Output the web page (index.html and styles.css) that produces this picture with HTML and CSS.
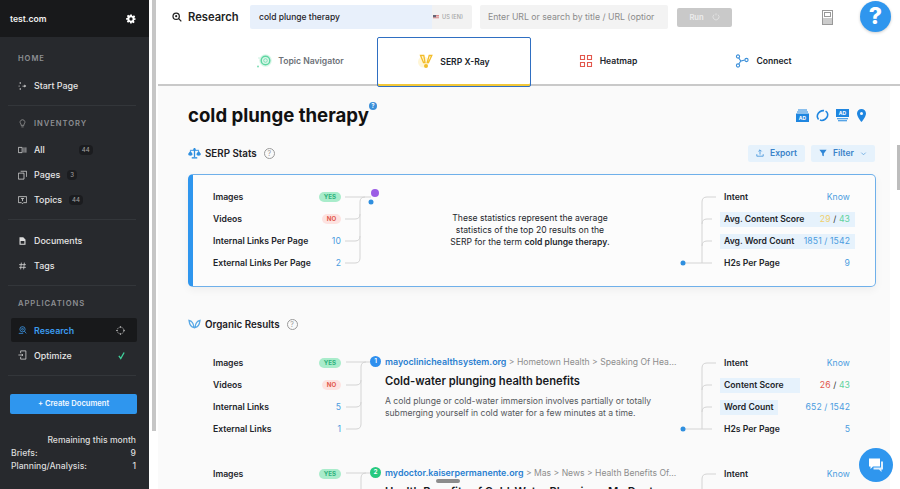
FILE: index.html
```html
<!DOCTYPE html>
<html lang="en">
<head>
<meta charset="utf-8">
<title>Research</title>
<link rel="stylesheet" href="styles.css">
</head>
<body>
<div class="app">
  <aside class="sidebar">
    <header class="brand">
      <span>test.com</span>
      <svg class="gear" viewBox="0 0 24 24"><path fill="#fff" fill-rule="evenodd" d="M10 1h4l.6 3.2 1.900.8 2.700-1.800 2.800 2.800-1.800 2.700.8 1.900L23 10v4l-3.200.6-.8 1.900 1.800 2.700-2.800 2.800-2.700-1.800-1.900.8L14 23h-4l-.6-3.200-1.900-.8-2.700 1.800-2.800-2.800 1.800-2.700-.8-1.900L0 14v-4l3.200-.6.8-1.900-1.800-2.700L5 2l2.700 1.800 1.900-.8zM12 8a4 4 0 100 8 4 4 0 000-8z"/></svg>
    </header>
    <div class="side-title side-home">HOME</div>
    <div class="nav-item">
      <svg class="nav-icon" viewBox="0 0 12 12"><g fill="#ddd"><circle cx="3" cy="2" r="1"/><circle cx="3" cy="10" r="1"/><circle cx="1.500" cy="6" r=".8"/><path d="M6 5.500h2.500V4l2.500 2-2.500 2V6.500H6z"/></g></svg>
      <span>Start Page</span>
    </div>
    <div class="divider"></div>
    <div class="side-title side-inv">
      <svg class="nav-icon-s" viewBox="0 0 12 12"><path fill="none" stroke="#999" stroke-width="1" d="M6 1a3.200 3.200 0 012 5.700V8.500H4V6.700A3.200 3.200 0 016 1zM4.500 10.500h3"/></svg>
      <span>INVENTORY</span>
    </div>
    <div class="nav-item">
      <svg class="nav-icon" viewBox="0 0 12 12"><path fill="none" stroke="#ddd" d="M.5 2.500h5v7h-5zM8 2.500v7M10.500 2.500v7"/></svg>
      <span>All</span><b class="count count-all">44</b>
    </div>
    <div class="nav-item">
      <svg class="nav-icon" viewBox="0 0 12 12"><path fill="none" stroke="#ddd" d="M.5 3.500h7.500v8H.5zM3.500 1h8v7.500"/></svg>
      <span>Pages</span><b class="count">3</b>
    </div>
    <div class="nav-item">
      <svg class="nav-icon" viewBox="0 0 12 12"><path fill="none" stroke="#ddd" d="M.5 1.500h11v8H7.500L6 11 4.500 9.500H.5zM4 4h4M6 4v3.500"/></svg>
      <span>Topics</span><b class="count">44</b>
    </div>
    <div class="divider"></div>
    <div class="nav-group">
      <div class="nav-item">
        <svg class="nav-icon" viewBox="0 0 12 12"><path fill="#ddd" d="M2 1h5l3 3v7H2zM3.500 6v3.500h5V6z"/></svg>
        <span>Documents</span>
      </div>
      <div class="nav-item">
        <svg class="nav-icon" viewBox="0 0 12 12"><path fill="none" stroke="#ddd" d="M4.500 1.500L3.500 10.500M8.500 1.500L7.500 10.500M1.500 4.200h9M1.500 7.800h9"/></svg>
        <span>Tags</span>
      </div>
    </div>
    <div class="divider"></div>
    <div class="side-title side-app">APPLICATIONS</div>
    <div class="nav-item nav-active">
      <svg class="nav-icon" viewBox="0 0 12 12"><g fill="none" stroke="#3c9bee"><circle cx="6" cy="5" r="3.500"/><circle cx="6" cy="5" r="1.200"/><path d="M8.500 7.500l2.500 3M1 10.500h6"/></g></svg>
      <span>Research</span>
      <svg class="spark" viewBox="0 0 12 12"><path stroke="#bbb" stroke-width="1.100" stroke-dasharray="1.500 1" fill="none" d="M6 1.500a4.500 4.500 0 110 9 4.500 4.500 0 010-9z"/><path stroke="#bbb" d="M6 0v2.500M6 9.500V12M0 6h2.500M9.500 6H12"/></svg>
    </div>
    <div class="nav-item nav-opt">
      <svg class="nav-icon" viewBox="0 0 12 12"><path fill="none" stroke="#ddd" d="M3.500 3.500V.5h7v11h-7V8.500M.5 6h6M5 4.500L6.500 6 5 7.500"/></svg>
      <span>Optimize</span>
      <svg class="check" viewBox="0 0 12 12"><path fill="none" stroke="#3fcf9a" stroke-width="1.800" d="M2.500 6.500L5 10l4.500-8"/></svg>
    </div>
    <div class="divider"></div>
    <button class="create">+ Create Document</button>
    <div class="remain">Remaining this month</div>
    <div class="remain-row"><span>Briefs:</span><span>9</span></div>
    <div class="remain-row"><span>Planning/Analysis:</span><span>1</span></div>
  </aside>

  <div class="side-scroll"><div class="side-thumb"></div></div>

  <main class="main">
    <div class="topbar">
      <svg class="search-icon" viewBox="0 0 12 12"><g fill="none" stroke="#222" stroke-width="1.500"><circle cx="5" cy="5" r="3.800"/><path d="M8 8l3.200 3.200"/></g><circle cx="5" cy="5" r="1.300" fill="#222"/></svg>
      <span class="page-title">Research</span>
      <div class="kw-field">
        <span class="kw-text">cold plunge therapy</span>
        <span class="kw-locale">
          <svg class="flag" viewBox="0 0 8 6"><rect width="8" height="6" fill="#d88"/><rect y="2" width="8" height="1" fill="#eee"/><rect y="4" width="8" height="1" fill="#eee"/><rect width="4" height="3" fill="#667"/></svg>
          US (EN)
        </span>
      </div>
      <div class="url-field">Enter URL or search by title / URL (optior</div>
      <button class="run">Run
        <svg class="run-spin" viewBox="0 0 12 12"><path fill="none" stroke="#e6e6e6" stroke-width="1.200" d="M3 2.500a4.500 4.500 0 106 0M6 .5v3"/></svg>
      </button>
      <svg class="book" viewBox="0 0 11 15"><g fill="none" stroke="#999"><rect x=".5" y=".5" width="10" height="14"/><rect x="2.500" y="2.500" width="6" height="4"/><path d="M1 9h9M1 11h9M1 13h9"/></g></svg>
    </div>

    <nav class="tabs">
      <div class="tab tab-muted">
        <svg class="tab-icon" viewBox="0 0 16 16"><circle cx="9.500" cy="7.500" r="6.300" fill="#dcf7ea"/><circle cx="9.500" cy="7.500" r="4.300" fill="none" stroke="#5ed6a2" stroke-width="1.500"/><circle cx="9.500" cy="7.500" r="1.800" fill="none" stroke="#7fdfb6" stroke-width="1"/><circle cx="2" cy="13.500" r="1" fill="#7fdfb6"/><circle cx="3" cy="5" r=".8" fill="#c5f0dc"/></svg>
        <span>Topic Navigator</span>
      </div>
      <div class="tab tab-active">
        <svg class="tab-icon" viewBox="0 0 16 16"><circle cx="5.500" cy="8" r="5.500" fill="#fff6d6"/><g fill="none" stroke="#f3bd2a" stroke-width="1.300"><path d="M2.500 1.500h3.300l1.200 7H5.500zM13.800 1.500h-2.600L9.200 8.500h1.300z"/></g><circle cx="8" cy="12" r="2" fill="#f3bd2a"/></svg>
        <span>SERP X-Ray</span>
      </div>
      <div class="tab tab-plain">
        <svg class="tab-icon tab-icon-s" viewBox="0 0 14 14"><path fill="none" stroke="#e2574c" stroke-width="1.100" d="M1.500 1.500h4v4h-4zM8.500 1.500h4v4h-4zM1.500 8.500h4v4h-4zM8.500 8.500h4v4h-4z"/></svg>
        <span>Heatmap</span>
      </div>
      <div class="tab tab-plain tab-last">
        <svg class="tab-icon tab-icon-s" viewBox="0 0 14 14"><g fill="none" stroke="#3b8fd9" stroke-width="1.100"><circle cx="3" cy="2.500" r="1.600"/><circle cx="3" cy="11.500" r="1.600"/><circle cx="11.500" cy="6" r="1.600"/><path d="M3.800 4l2 3 4-1M3.800 10l2-3"/></g></svg>
        <span>Connect</span>
      </div>
    </nav>

    <div class="content">
      <div class="title-row">
        <h1>cold plunge therapy<sup class="q-dot">?</sup></h1>
        <div class="serp-icons">
          <svg viewBox="0 0 13 13"><path fill="#1f86e0" d="M2 .5h9v1H2zM1 2.500h11v1H1zM0 4.500h13V13H0z"/><text x="6.500" y="11" class="ad-text">AD</text></svg>
          <svg viewBox="0 0 13 13"><ellipse class="loop" cx="6.500" cy="6.500" rx="5.500" ry="4.600" transform="rotate(-35 6.500 6.500)"/></svg>
          <svg viewBox="0 0 13 13"><path fill="#1f86e0" d="M0 0h13v8H0zM1 9.300h11v1H1zM2 11.300h9v1H2z"/><text x="6.500" y="6.200" class="ad-text">AD</text></svg>
          <svg class="pin" viewBox="0 0 9 13"><path fill="#1f86e0" fill-rule="evenodd" d="M4.500 0A4.500 4.500 0 000 4.500C0 8 4.500 13 4.500 13S9 8 9 4.500A4.500 4.500 0 004.500 0zm0 3a1.500 1.500 0 110 3 1.500 1.500 0 010-3z"/></svg>
        </div>
      </div>

      <section>
        <div class="sec-head sec-stats">
          <svg class="sec-icon" viewBox="0 0 14 12"><g fill="#2f8fdf"><rect x="6.300" y="0" width="1.400" height="10"/><rect x="4" y="10" width="6" height="1.500"/><rect x="2" y="2" width="10" height="1"/><circle cx="7" cy="1.500" r="1.300"/><path d="M0 6.500L2.500 3 5 6.500a2.500 2 0 01-5 0zM9 6.500L11.500 3 14 6.500a2.500 2 0 01-5 0z"/></g></svg>
          <h2>SERP Stats</h2>
          <span class="q-ring">?</span>
          <div class="actions">
            <button class="btn-soft">
              <svg class="btn-icon" viewBox="0 0 10 10"><path fill="none" stroke="#3b8fd9" d="M1 6.500V9h8V6.500M5 7V1.500M3 3l2-2 2 2"/></svg>
              Export
            </button>
            <button class="btn-soft btn-filter">
              <svg class="btn-icon" viewBox="0 0 10 10"><path fill="#2f86d6" d="M.5 1h9L6 5.500V9L4 8V5.500z"/></svg>
              Filter
              <svg class="chev" viewBox="0 0 8 8"><path fill="none" stroke="#6aa9e0" d="M1.500 3L4 5.500 6.500 3"/></svg>
            </button>
          </div>
        </div>

        <div class="stats-card">
          <div class="metrics metrics-left">
            <div class="m-row"><span>Images</span><i class="pill pill-yes">YES</i></div>
            <div class="m-row"><span>Videos</span><i class="pill pill-no">NO</i></div>
            <div class="m-row"><span>Internal Links Per Page</span><em>10</em></div>
            <div class="m-row"><span>External Links Per Page</span><em>2</em></div>
          </div>
          <svg class="conn-left" viewBox="0 0 37 88">
            <path class="line" d="M2 11H28M2 33H12Q17 33 17 28M2 55H12Q17 55 17 50M2 77H12Q17 77 17 72V16Q17 11 22 11"/>
            <circle cx="32" cy="7" r="4" fill="#9b5de5"/><circle cx="28" cy="16" r="2.500" fill="#2f8fdf"/>
          </svg>
          <p class="stats-note">These statistics represent the average statistics of the top 20 results on the SERP for the term <b>cold plunge therapy.</b></p>
          <svg class="conn-right" viewBox="0 0 40 88">
            <path class="line" d="M3 77H32M22 77V16Q22 11 27 11H36M22 38Q22 33 27 33H32M22 60Q22 55 27 55H32"/>
            <circle cx="3" cy="77" r="2.500" fill="#2f8fdf"/>
          </svg>
          <div class="metrics metrics-right">
            <div class="m-row"><span>Intent</span><em>Know</em></div>
            <div class="m-row m-hl"><span>Avg. Content Score</span><em><u class="c-yellow">29</u> <u class="c-dark">/</u> <u class="c-green">43</u></em></div>
            <div class="m-row m-hl"><span>Avg. Word Count</span><em>1851 / 1542</em></div>
            <div class="m-row"><span>H2s Per Page</span><em>9</em></div>
          </div>
        </div>
      </section>

      <section>
        <div class="sec-head sec-organic">
          <svg class="sec-icon" viewBox="0 0 14 12"><g fill="none" stroke="#5aa9e6" stroke-width="1.400"><path d="M1 1.500c3 .5 5 3 5.500 8C3.500 9 1.500 6 1 1.500zM13 1.500c-3 .5-5 3-5.500 8C10.500 9 12.500 6 13 1.500z"/></g></svg>
          <h2>Organic Results</h2>
          <span class="q-ring">?</span>
        </div>

        <article class="result">
          <div class="metrics metrics-left">
            <div class="m-row"><span>Images</span><i class="pill pill-yes">YES</i></div>
            <div class="m-row"><span>Videos</span><i class="pill pill-no">NO</i></div>
            <div class="m-row"><span>Internal Links</span><em>5</em></div>
            <div class="m-row"><span>External Links</span><em>1</em></div>
          </div>
          <svg class="conn-org" viewBox="0 0 26 88">
            <path class="line" d="M2 10H26M2 33H12Q17 33 17 28M2 55H12Q17 55 17 50M2 77H12Q17 77 17 72V15Q17 10 22 10"/>
          </svg>
          <div class="r-body">
            <div class="r-url"><span class="badge">1</span><a>mayoclinichealthsystem.org</a><span class="crumb"> &gt; Hometown Health &gt; Speaking Of Hea...</span></div>
            <h3>Cold-water plunging health benefits</h3>
            <p>A cold plunge or cold-water immersion involves partially or totally submerging yourself in cold water for a few minutes at a time.</p>
          </div>
          <svg class="conn-right" viewBox="0 0 40 88">
            <path class="line" d="M3 77H32M22 77V16Q22 11 27 11H36M22 38Q22 33 27 33H32M22 60Q22 55 27 55H32"/>
            <circle cx="3" cy="77" r="2.500" fill="#2f8fdf"/>
          </svg>
          <div class="metrics metrics-right">
            <div class="m-row"><span>Intent</span><em>Know</em></div>
            <div class="m-row"><span class="t-hl t-hl-score">Content Score</span><em><u class="c-red">26</u> <u class="c-dark">/</u> <u class="c-green">43</u></em></div>
            <div class="m-row"><span class="t-hl">Word Count</span><em>652 / 1542</em></div>
            <div class="m-row"><span>H2s Per Page</span><em>5</em></div>
          </div>
        </article>

        <article class="result result-next">
          <div class="metrics metrics-left">
            <div class="m-row"><span>Images</span><i class="pill pill-yes">YES</i></div>
            <div class="m-row"><span>Videos</span><i class="pill pill-no">NO</i></div>
          </div>
          <svg class="conn-org" viewBox="0 0 26 88">
            <path class="line" d="M2 10H26M17 88V15Q17 10 22 10"/>
          </svg>
          <div class="r-body">
            <div class="r-url"><span class="badge badge-green">2</span><a>mydoctor.kaiserpermanente.org</a><span class="crumb"> &gt; Mas &gt; News &gt; Health Benefits Of...</span></div>
            <h3>Health Benefits of Cold-Water Plunging - My Doctor</h3>
          </div>
          <svg class="conn-right" viewBox="0 0 40 88">
            <path class="line" d="M22 88V16Q22 11 27 11H36"/>
          </svg>
          <div class="metrics metrics-right">
            <div class="m-row"><span>Intent</span><em>Know</em></div>
          </div>
        </article>
      </section>
    </div>
    <div class="main-thumb"></div>
  </main>

  <div class="help">?</div>
  <div class="chat">
    <svg viewBox="0 0 16 16"><path fill="#fff" d="M1 1.500h11v8H5L2.500 12V9.500H1z"/><path fill="#fff" opacity=".85" d="M13 4.500h2v8h-1.500V15L11 12.500H5.500v-2H13z"/></svg>
  </div>
  <div class="grab"></div>
</div>
</body>
</html>
```

FILE: styles.css
```css
* { box-sizing: border-box; }
html, body { margin: 0; height: 489px; overflow: hidden; background: #fff; }
body { font-family: Inter, "Liberation Sans", sans-serif; color: #1f2227; }
button { font-family: inherit; border: 0; padding: 0; }
h1, h2, h3, p { margin: 0; }
em, i, u { font-style: normal; text-decoration: none; }

.app { display: flex; width: 900px; height: 489px; position: relative; overflow: hidden; }

/* Sidebar */
.sidebar { width: 149px; flex: none; height: 489px; background: #27292d; color: #e8e8e8; display: flex; flex-direction: column; }
.brand { height: 37px; flex: none; background: #18191b; display: flex; align-items: center; justify-content: space-between; padding: 0 13px 0 10px; font-size: 8.600px; font-weight: 600; color: #f2f2f2; }
.gear { width: 10px; height: 10px; }
.side-title { font-size: 7.600px; font-weight: 600; letter-spacing: .95px; color: #8d8f93; height: 12px; line-height: 12px; padding-left: 18px; display: flex; align-items: center; flex: none; }
.side-home { margin-top: 16px; margin-bottom: 8px; }
.side-inv { margin-top: 11.500px; margin-bottom: 7.500px; }
.side-app { margin-top: 11.500px; margin-bottom: 8.500px; }
.nav-icon-s { width: 9px; height: 9px; margin-right: 7px; }
.nav-item { height: 25px; display: flex; align-items: center; padding-left: 18px; font-size: 8.900px; font-weight: 500; color: #e6e6e6; flex: none; }
.nav-icon { width: 9px; height: 10px; margin-right: 7px; flex: none; }
.nav-group { margin-top: 8px; flex: none; }
.count { background: #1b1c1f; color: #9a9a9a; font-size: 6px; font-weight: 500; border-radius: 4px; padding: 1.500px 3px; margin-left: 7px; }
.count-all { margin-left: 34px; }
.divider { height: 1px; background: #33363a; margin: 7px 13px 0 8px; flex: none; }
.nav-active { width: 126px; margin-left: 11px; height: 24px; padding-left: 7px; background: #18191b; border-radius: 2px; color: #3c9bee; font-weight: 600; }
.spark { width: 9px; height: 9px; margin-left: auto; margin-right: 12px; }
.nav-opt { padding-right: 23px; margin-top: .500px; }
.check { width: 9px; height: 9px; margin-left: auto; }
.create { width: 127px; height: 20px; margin: 18px 0 0 10px; background: #2f96ee; color: #f4f9ff; font-size: 7.600px; font-weight: 600; border-radius: 2px; flex: none; }
.remain { margin-top: 20px; padding-right: 13px; text-align: right; font-size: 8.600px; font-weight: 500; line-height: 13px; color: #dcdcdc; }
.remain-row { display: flex; justify-content: space-between; padding: 0 13px 0 11px; font-size: 8.600px; font-weight: 500; line-height: 13.500px; color: #dcdcdc; }

.side-scroll { width: 9px; flex: none; background: #fff; padding: 0 2px 0 3px; }
.side-thumb { width: 4px; height: 431px; background: #c6c6c6; }

/* Main */
.main { flex: 1; min-width: 0; display: flex; flex-direction: column; position: relative; }
.topbar { height: 37px; flex: none; display: flex; align-items: center; padding: 0 0 3px 14px; background: #fff; }
.search-icon { width: 10px; height: 10px; margin-right: 6px; flex: none; }
.page-title { font-size: 11.200px; font-weight: 600; width: 62px; flex: none; color: #222; }
.kw-field { width: 222px; height: 24px; flex: none; background: linear-gradient(90deg, #e8f0fb 0, #e8f0fb 182px, #f2f2f2 182px); border-radius: 2px; display: flex; align-items: center; padding: 0 9px; font-size: 8.500px; font-weight: 500; }
.kw-text { flex: 1; }
.kw-locale { font-size: 5.600px; color: #a5a5a5; display: flex; align-items: center; gap: 3px; }
.flag { width: 6px; height: 4.500px; }
.url-field { width: 188px; height: 24px; margin-left: 8px; flex: none; background: #f3f3f3; border-radius: 2px; padding: 0 8px; font-size: 8.700px; line-height: 24px; color: #8b8b8b; white-space: nowrap; overflow: hidden; }
.run { width: 55px; height: 19px; margin-left: 9px; flex: none; background: #c9c9c9; color: #ededed; font-size: 7.600px; font-weight: 600; border-radius: 2px; display: flex; align-items: center; justify-content: center; gap: 8px; }
.run-spin { width: 8px; height: 8px; }
.book { width: 11px; height: 15px; margin-left: 90px; flex: none; }

.tabs { height: 49px; flex: none; display: grid; grid-template-columns: repeat(4, 154px); padding-left: 65px; background: #fff; border-bottom: 2px solid #c9c9c9; }
.tab { display: flex; align-items: center; justify-content: center; gap: 6px; font-size: 8.600px; font-weight: 600; color: #20242b; height: 48px; }
.tab-plain { gap: 7px; }
.tab-last { padding-left: 3px; }
.tab-muted { color: #6d7278; }
.tab-active { border: 1px solid #2f6fc2; border-radius: 2px; height: 50px; position: relative; z-index: 1; box-shadow: inset 0 -2px 0 #f2c83a; }
.tab-icon { width: 16px; height: 16px; flex: none; }
.tab-icon-s { width: 14px; height: 14px; }

.content { flex: 1; min-height: 0; background: #fafafa; margin-right: 10px; padding: 0 14px 0 30px; overflow: hidden; }
.title-row { display: flex; align-items: center; justify-content: space-between; padding-top: 15px; height: 43px; }
h1 { font-size: 18.600px; font-weight: 700; line-height: 28px; color: #111; display: flex; }
.q-dot { width: 8px; height: 8px; border-radius: 50%; background: #3b8fd9; color: #fff; font-size: 6px; font-weight: 600; line-height: 8px; text-align: center; margin: 1px 0 0 0; }
.serp-icons { display: flex; gap: 7px; margin-right: 10px; }
.serp-icons svg { width: 13px; height: 13px; display: block; }
.serp-icons .pin { width: 9px; margin-left: 1px; }
.ad-text { font: 700 5px Inter, sans-serif; fill: #fff; text-anchor: middle; }
.loop { fill: none; stroke: #1f86e0; stroke-width: 1.600; stroke-dasharray: 13 1.500; }

.sec-head { display: flex; align-items: center; }
.sec-stats { height: 18px; margin-top: 15px; margin-bottom: 12px; }
.sec-organic { height: 16px; margin-top: 29px; margin-bottom: 20px; }
.sec-icon { width: 13px; height: 11px; margin-right: 4px; flex: none; }
h2 { font-size: 9.800px; font-weight: 600; color: #1d2025; }
.q-ring { width: 11px; height: 11px; border: 1px solid #9a9a9a; border-radius: 50%; font-size: 7px; line-height: 9px; text-align: center; color: #9a9a9a; margin-left: 7px; }
.actions { margin-left: auto; display: flex; gap: 6px; margin-right: 1px; }
.btn-soft { height: 17px; width: 57px; background: #e6f2fc; border-radius: 2px; color: #3b83c9; font-size: 8.500px; font-weight: 600; display: flex; align-items: center; justify-content: center; gap: 6px; }
.btn-filter { width: 64px; }
.btn-icon { width: 8px; height: 8px; }
.chev { width: 7px; height: 7px; }

.stats-card { height: 113px; background: #fcfcfc; border: 1px solid #6fb0ea; border-left: 5px solid #2f96ee; border-radius: 5px; padding: 11px 20px 0; display: flex; box-shadow: 0 3px 8px rgba(0,0,0,.05); }
.metrics { flex: none; font-size: 8.650px; font-weight: 600; color: #22252a; display: flex; flex-direction: column; }
.metrics-left { width: 128px; }
.metrics-right { width: 135px; }
.m-row { height: 22px; flex: none; display: flex; align-items: center; justify-content: space-between; }
.metrics-right .m-row { padding: 0 5px 0 4px; }
.m-row em { font-weight: 400; color: #4b9ce0; letter-spacing: .1px; }
.m-hl { background: linear-gradient(#e6f2fc, #e6f2fc) center / 100% 15px no-repeat; }
.pill { font-size: 6.200px; font-weight: 700; height: 10px; line-height: 10px; border-radius: 5px; text-align: center; }
.pill-yes { width: 22px; background: #a9eccb; color: #2fb37e; }
.pill-no { width: 19px; background: #fde3e1; color: #e2574c; }
.c-yellow { color: #f0cf6a; }
.c-green { color: #5fd39d; }
.c-red { color: #e2574c; }
.c-dark { color: #333; }
.conn-left { width: 37px; height: 88px; flex: none; margin-left: 2px; }
.conn-right { width: 40px; height: 88px; flex: none; }
.conn-org { width: 26px; height: 88px; flex: none; margin-left: 3px; }
.line { fill: none; stroke: #d4d4d4; stroke-width: 1; }
.stats-note { flex: 1; min-width: 0; font-size: 8.600px; line-height: 12px; text-align: center; align-self: center; padding: 0 67px; margin-bottom: 12px; color: #24272c; }
.stats-note b { font-weight: 600; }

.result { display: flex; height: 88px; padding-left: 25px; padding-right: 21px; }
.result-next { margin-top: 23px; }
.r-body { flex: 1; min-width: 0; padding-top: 4px; }
.r-url { display: flex; align-items: center; height: 11px; font-size: 8.900px; white-space: nowrap; }
.r-url a { color: #2a7fd0; font-weight: 600; }
.crumb { color: #8d8d8d; white-space: pre; font-size: 8.600px; }
.badge { width: 11px; height: 11px; border-radius: 50%; background: #2f8fee; color: #fff; font-size: 6.500px; font-weight: 600; line-height: 11px; text-align: center; margin-right: 4px; flex: none; }
.badge-green { background: #27c97f; }
.r-body h3 { font-size: 11.200px; font-weight: 600; line-height: 14px; margin: 7px 0 7px 15px; color: #17191d; white-space: nowrap; }
.r-body p { font-size: 8.600px; line-height: 12px; margin-left: 15px; width: 285px; color: #55585c; }
.t-hl { background: #e6f2fc; height: 15px; line-height: 15px; margin-left: -4px; padding: 0 4px; }
.t-hl-score { padding-right: 16px; }

.main-thumb { position: absolute; right: 0; top: 145px; width: 3px; height: 45px; background: #bdbdbd; }
.help { position: absolute; left: 860px; top: 1px; width: 31px; height: 31px; border-radius: 50%; background: #2f96ee; color: #fff; font-size: 23px; font-weight: 800; line-height: 31px; text-align: center; box-shadow: 0 1px 3px rgba(0,0,0,.2); }
.chat { position: absolute; left: 859px; top: 448px; width: 34px; height: 34px; border-radius: 50%; background: #2f96ee; display: flex; align-items: center; justify-content: center; }
.chat svg { width: 16px; height: 16px; }
.grab { position: absolute; left: 436px; top: 479px; width: 24px; height: 4px; border-radius: 2px; background: #8c8c8c; }
```
